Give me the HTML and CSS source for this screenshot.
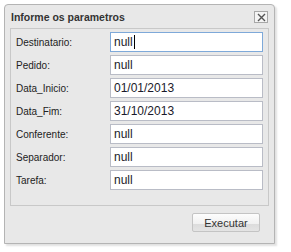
FILE: index.html
```html
<!DOCTYPE html>
<html lang="pt">
  <head>
    <meta charset="UTF-8" />
    <title>Informe os parametros</title>
    <link rel="stylesheet" href="styles.css">
  </head>
  <body>
    <div class="dialog">
      <div class="title-bar">
        <span class="title">Informe os parametros</span>
        <span class="close">
          <svg width="9" height="9" viewBox="0 0 9 9">
            <path d="M1 1 L8 8 M8 1 L1 8" stroke="#555" stroke-width="1.4" />
          </svg>
        </span>
      </div>

      <!-- parametros -->
      <div class="panel">
        <div class="row">
          <label>Destinatario:</label>
          <div class="field focused">null<span class="caret"></span></div>
        </div>
        <div class="row">
          <label>Pedido:</label>
          <div class="field">null</div>
        </div>
        <div class="row">
          <label>Data_Inicio:</label>
          <div class="field">01/01/2013</div>
        </div>
        <div class="row">
          <label>Data_Fim:</label>
          <div class="field">31/10/2013</div>
        </div>
        <div class="row">
          <label>Conferente:</label>
          <div class="field">null</div>
        </div>
        <div class="row">
          <label>Separador:</label>
          <div class="field">null</div>
        </div>
        <div class="row">
          <label>Tarefa:</label>
          <div class="field">null</div>
        </div>
      </div>

      <div class="footer">
        <button>Executar</button>
      </div>
    </div>
  </body>
</html>
```

FILE: styles.css
```css
* {
  box-sizing: border-box;
}

body {
  margin: 0;
  padding: 4px;
  background: #fff;
  font-family: "Liberation Sans", Arial, sans-serif;
  font-size: 11px;
  color: #222;
}

.dialog {
  width: 271px;
  height: 240px;
  background: #e8e8e8;
  border: 1px solid #b4b4b4;
  border-radius: 4px 4px 0 0;
  box-shadow: 2px 2px 2px rgba(0, 0, 0, 0.12);
  padding: 0 5px;
}

.title-bar {
  height: 23px;
  display: flex;
  align-items: center;
  justify-content: space-between;
  padding: 1px 0 0 1px;
}

.title {
  font-weight: bold;
  font-size: 10.5px;
  color: #333;
}

.close {
  width: 14px;
  height: 12px;
  border: 1px solid #a8a8a8;
  background: #f4f4f4;
  display: flex;
  align-items: center;
  justify-content: center;
  margin-right: 1px;
}

.panel {
  border: 1px solid #c8c8c8;
  padding: 3px 5px 15px 5px;
  display: flex;
  flex-direction: column;
  gap: 3px;
}

.row {
  display: flex;
  align-items: center;
  height: 20px;
}

.row label {
  width: 94px;
  font-size: 10px;
  color: #222;
}

.field {
  flex: 1;
  height: 20px;
  background: #fff;
  border: 1px solid #b9bcc6;
  padding: 0 3px;
  display: flex;
  align-items: center;
  font-size: 12px;
  color: #1a1a2a;
}

.field.focused {
  border-color: #7ea9d9;
}

.caret {
  width: 1px;
  height: 14px;
  background: #000;
  margin-left: 1px;
}

.footer {
  display: flex;
  justify-content: flex-end;
  padding: 7px 9px 0 0;
}

button {
  width: 68px;
  height: 19px;
  font-family: "Liberation Sans", Arial, sans-serif;
  font-size: 11px;
  color: #333;
  border: 1px solid #c4c4c4;
  border-radius: 2px;
  background: linear-gradient(#fdfdfd, #f0f0f0 60%, #dcdcdc 60%, #e4e4e4);
  padding: 0;
}
```
